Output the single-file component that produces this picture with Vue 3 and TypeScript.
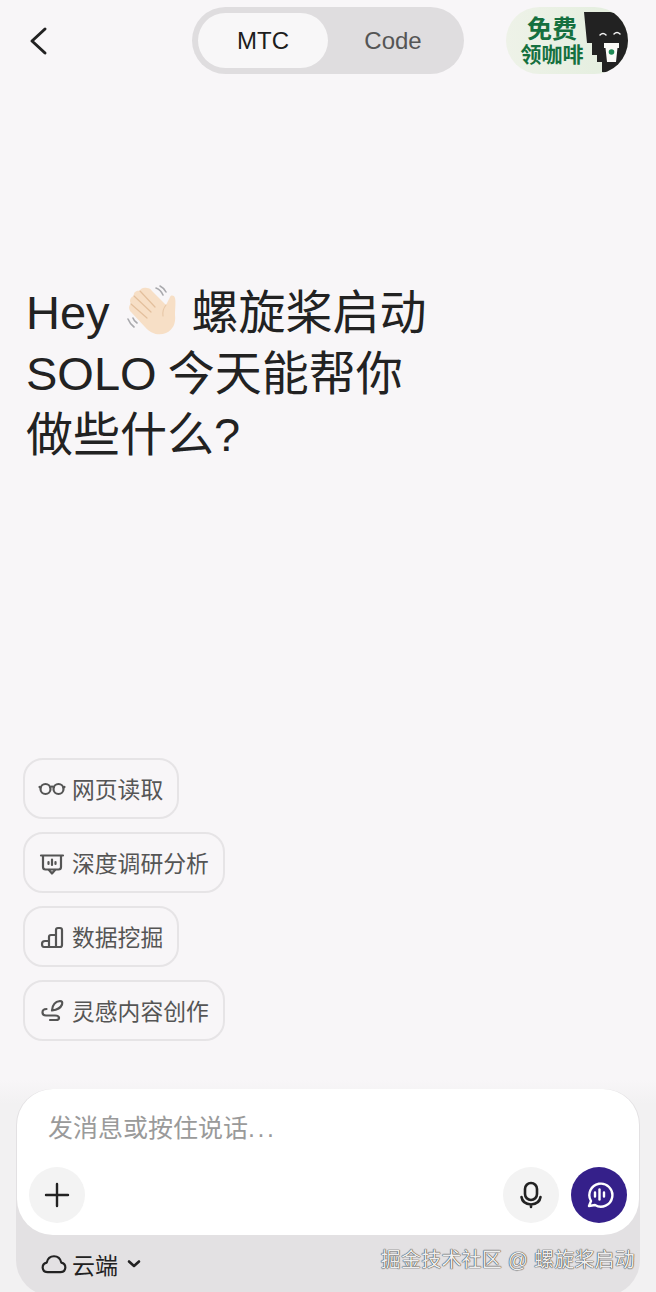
<script setup lang="ts">
const chips = [
  { label: "网页读取", icon: "glasses" },
  { label: "深度调研分析", icon: "board" },
  { label: "数据挖掘", icon: "bars" },
  { label: "灵感内容创作", icon: "spark" },
];
</script>

<template>
  <div class="page">
    <header class="top">
      <button class="back" aria-label="back">
        <svg width="24" height="32" viewBox="0 0 24 32" fill="none" stroke="#222" stroke-width="3" stroke-linecap="round" stroke-linejoin="round">
          <path d="M21 4 L8 16 L21 28" />
        </svg>
      </button>
      <div class="switch">
        <span class="tab active">MTC</span>
        <span class="tab">Code</span>
      </div>
      <div class="promo">
        <div class="promo-text">
          <b class="free">免费</b>
          <b class="coffee">领咖啡</b>
        </div>
        <svg class="promo-art" width="44" height="67" viewBox="0 0 44 67">
          <path d="M0 5 L26 5 A30 30 0 0 1 18 65 L18 55 L13 55 L13 48 L8 48 L8 36 L3 36 Z" fill="#222" />
          <path d="M16 28 q3 -3 6 0 M30 27 q3 -3 6 0" fill="none" stroke="#f4f4f4" stroke-width="1.5" stroke-linecap="round" />
          <path d="M20 36 L35 36 L35 41 L33.500 41 L32 55 L23 55 L21.500 41 L20 41 Z" fill="#fbfbf8" />
          <circle cx="27.500" cy="45" r="2.800" fill="#1f8a55" />
        </svg>
      </div>
    </header>

    <h1 class="hero">
      <span class="hero-line">
        Hey
        <svg class="wave" width="54" height="54" viewBox="0 0 54 54" fill="none" stroke-linecap="round">
          <path d="M31 3 q5 2 7 7 M35 1 q4 2 6 6 M3 34 q2 5 6 8 M8 33 q1 3 4 5" stroke="#a9a9ad" stroke-width="1.600" />
          <path d="M22 3 C18 2 15 4 15 6 C11 5 8 8 9 11 C5 12 4 16 6 19 C3 21 4 25 6 27 L20 42 C26 49 34 51 41 48 C48 45 51 38 50 30 C50 24 51 17 50 13 C49 10 46 10 45 12 L41 20 L27 6 C26 4 24 3 22 3 Z" fill="#f7dfc6" />
          <path d="M15 6 L30 22 M9 11 L26 27 M6 19 L22 33" stroke="#e3bf9c" stroke-width="1.200" />
          <path d="M41 20 Q37 25 38 31" stroke="#e8c8a8" stroke-width="1.200" />
        </svg>
        螺旋桨启动
      </span>
      <span class="hero-line solo">SOLO 今天能帮你</span>
      <span class="hero-line">做些什么?</span>
    </h1>

    <div class="chips">
      <button v-for="chip in chips" :key="chip.label" class="chip">
        <svg width="28" height="28" viewBox="0 0 28 28" fill="none" stroke="#555" stroke-width="2.200" stroke-linecap="round" stroke-linejoin="round">
          <template v-if="chip.icon === 'glasses'">
            <circle cx="7.500" cy="14" r="5" />
            <circle cx="20.500" cy="14" r="5" />
            <path d="M12 12 q2 -1 4 0 M2.500 12.500 L1.500 12 M25.500 12.500 L26.500 12" />
          </template>
          <template v-else-if="chip.icon === 'board'">
            <path d="M3 6.500 H25 M5 6.500 V18 q0 2.500 2.500 2.500 H20.500 q2.500 0 2.500 -2.500 V6.500" />
            <path d="M10.500 13 V15 M14 10.500 V16 M17.500 13 V15 M11 21 L14 24.500 L17 21" />
          </template>
          <template v-else-if="chip.icon === 'bars'">
            <path d="M6 24 H22 q2 0 2 -2 V7 q0 -2 -2 -2 H20 q-2 0 -2 2 V24 M18 12 H13 q-2 0 -2 2 V24 M11 18 H7 q-3 0 -3 3 q0 3 2 3" />
          </template>
          <template v-else>
            <path d="M14 13.500 Q14.500 5 22 4 Q25 4 24 7.500 Q22 12.500 14 13.500 Z" />
            <path d="M8.500 12 Q4.500 12 4.500 15.500 Q4.500 18.500 8 18.500 H17 Q21 18.500 21 21 Q21 23 18 23 H12" />
          </template>
        </svg>
        <span>{{ chip.label }}</span>
      </button>
    </div>

    <div class="composer">
      <div class="tray">
        <div class="card">
          <div class="placeholder">发消息或按住说话<span class="dots">...</span></div>
          <div class="actions">
            <button class="round plain" aria-label="add">
              <svg width="26" height="26" viewBox="0 0 26 26" stroke="#222" stroke-width="2.400" stroke-linecap="round">
                <path d="M13 2 V24 M2 13 H24" />
              </svg>
            </button>
            <span class="spacer"></span>
            <button class="round plain" aria-label="voice">
              <svg width="24" height="28" viewBox="0 0 24 28" fill="none" stroke="#222" stroke-width="2.600" stroke-linecap="round">
                <rect x="6" y="2" width="12" height="17" rx="6" />
                <path d="M2.500 16 q1 7 9.500 7.500 q8.500 -.5 9.500 -7.500 M12 24 V26" />
              </svg>
            </button>
            <button class="round send" aria-label="call">
              <svg width="30" height="30" viewBox="0 0 30 30" fill="none" stroke="#fff" stroke-linecap="round">
                <path d="M5 26 L7 21 A11.500 11.500 0 1 1 11 25 Z" stroke-width="2.400" stroke-linejoin="round" />
                <path d="M15.500 9.500 V19.500" stroke-width="2.400" />
                <path d="M11 12.500 V16.500 M20 12.500 V16.500" stroke-width="2.400" />
              </svg>
            </button>
          </div>
        </div>
        <div class="foot">
          <svg width="26" height="20" viewBox="0 0 28 22" fill="none" stroke="#222" stroke-width="2.400" stroke-linejoin="round">
            <path d="M7 20 q-5 0 -5.500 -5 q0 -4.500 4.500 -5.500 q1.500 -7 8 -7 q6.500 0 8 7 q4.500 1 4.500 5.500 q-.5 5 -5.500 5 Z" />
          </svg>
          <span class="foot-label">云端</span>
          <svg class="caret" width="14" height="10" viewBox="0 0 14 10" fill="none" stroke="#222" stroke-width="2.600" stroke-linecap="round" stroke-linejoin="round">
            <path d="M2 2.500 L7 7 L12 2.500" />
          </svg>
        </div>
      </div>
      <div class="watermark">掘金技术社区 @ 螺旋桨启动</div>
    </div>
  </div>
</template>

<style>
html,
body {
  margin: 0;
  background: #f8f6f8;
}
</style>

<style scoped>
.page {
  position: relative;
  display: flex;
  flex-direction: column;
  width: 656px;
  height: 1292px;
  overflow: hidden;
  background: #f8f6f8;
  font-family: "Liberation Sans", "Noto Sans CJK SC", sans-serif;
  color: #222;
}
button {
  font-family: inherit;
  border: 0;
  padding: 0;
  background: none;
}
.top {
  display: flex;
  align-items: center;
  height: 67px;
  margin-top: 7px;
  padding: 0 28px 0 24px;
}
.back {
  display: flex;
  width: 24px;
}
.switch {
  display: flex;
  align-items: center;
  width: 272px;
  height: 67px;
  margin-left: 144px;
  padding: 0 6px;
  box-sizing: border-box;
  border-radius: 34px;
  background: #dfdddf;
}
.tab {
  flex: 1;
  text-align: center;
  font-size: 24px;
  color: #555;
}
.tab.active {
  flex: 0 0 130px;
  height: 55px;
  line-height: 55px;
  border-radius: 28px;
  background: #f8f7f8;
  color: #1d1d1d;
}
.promo {
  display: flex;
  align-items: center;
  justify-content: space-between;
  width: 122px;
  height: 67px;
  margin-left: auto;
  border-radius: 34px;
  overflow: hidden;
  background: linear-gradient(90deg, #eef2e8, #e3eede);
}
.promo-text {
  display: flex;
  flex-direction: column;
  align-items: center;
  width: 78px;
  padding-left: 14px;
  box-sizing: border-box;
  color: #15703f;
}
.free {
  font-size: 25px;
  line-height: 27px;
}
.coffee {
  font-size: 21px;
  line-height: 23px;
  white-space: nowrap;
}
.promo-art {
  flex: none;
}
.hero {
  display: flex;
  flex-direction: column;
  margin: 208px 0 0 26px;
  font-size: 47px;
  font-weight: 400;
  line-height: 61px;
  color: #222;
}
.hero-line {
  display: flex;
  align-items: center;
  gap: 13px;
  height: 61px;
  white-space: nowrap;
}
.solo {
  word-spacing: -2px;
}
.wave {
  flex: none;
  margin-top: -2px;
  margin-left: 2px;
}
.chips {
  display: flex;
  flex-direction: column;
  align-items: flex-start;
  gap: 13px;
  margin: 293px 0 0 23px;
}
.chip {
  display: flex;
  align-items: center;
  gap: 6px;
  height: 61px;
  padding: 0 14px 0 13px;
  box-sizing: border-box;
  border: 2px solid #e6e4e6;
  border-radius: 20px;
  font-size: 22.800px;
  color: #555;
}
.composer {
  margin-top: auto;
  height: 212px;
  padding: 9px 16px 0;
  box-sizing: border-box;
  background: linear-gradient(#f8f6f8, #f2f1f2 24px);
}
.tray {
  height: 207px;
  border-radius: 36px;
  background: #e3e1e3;
}
.card {
  display: flex;
  flex-direction: column;
  height: 146px;
  margin: 0 1px;
  border-radius: 36px;
  background: #fff;
  box-sizing: border-box;
  padding: 0 12px 12px;
}
.placeholder {
  margin: 23px 0 0 19px;
  font-size: 25px;
  line-height: 32px;
  color: #9a9a9a;
}
.dots {
  letter-spacing: 2.500px;
}
.actions {
  display: flex;
  align-items: center;
  gap: 12px;
  margin-top: auto;
}
.spacer {
  flex: 1;
}
.round {
  display: flex;
  align-items: center;
  justify-content: center;
  width: 56px;
  height: 56px;
  border-radius: 50%;
}
.plain {
  background: #f3f3f3;
}
.send {
  background: #35208a;
}
.foot {
  display: flex;
  align-items: center;
  height: 57px;
  padding-left: 25px;
  font-size: 23px;
  color: #222;
}
.foot-label {
  margin-left: 5px;
}
.caret {
  margin-left: 9px;
}
.watermark {
  position: absolute;
  right: 21px;
  bottom: 20px;
  font-size: 20px;
  line-height: 24px;
  letter-spacing: 0.200px;
  color: #eeeeee;
  text-shadow: 0 0 1px #222, 0 0 1px #222;
}
</style>
